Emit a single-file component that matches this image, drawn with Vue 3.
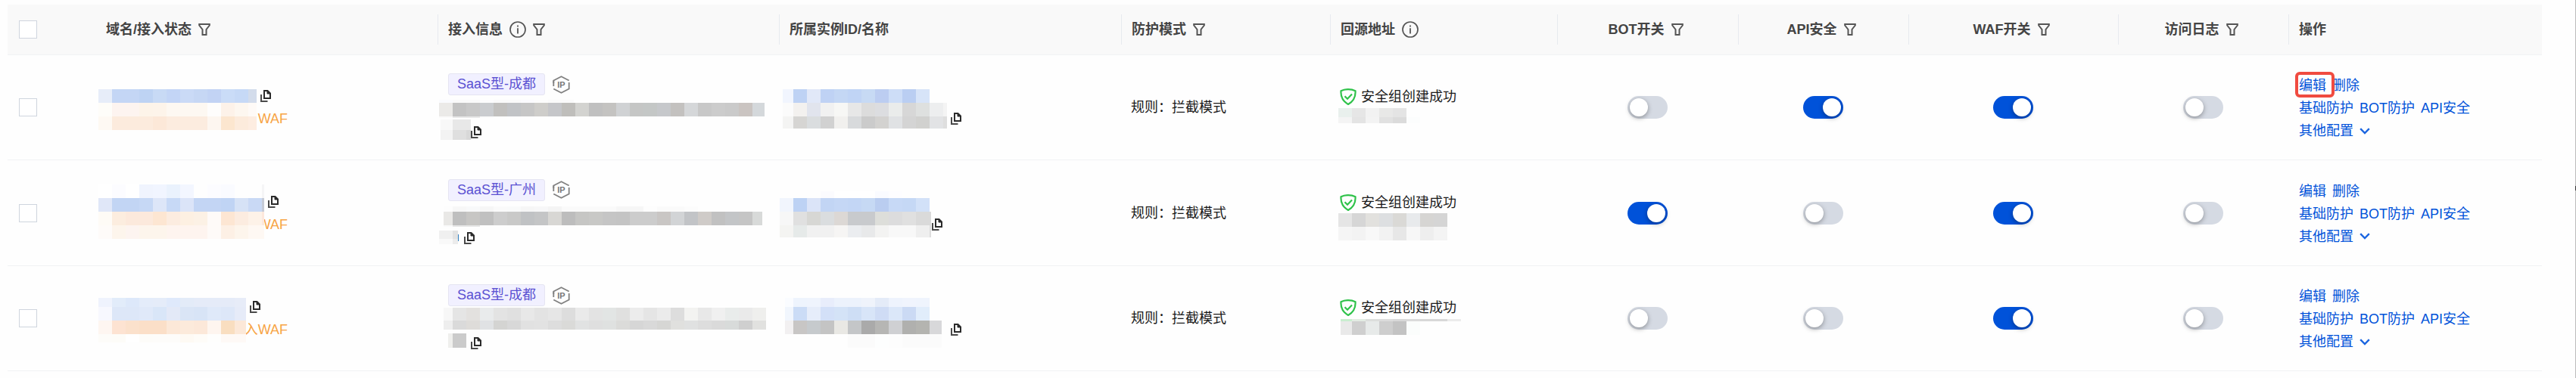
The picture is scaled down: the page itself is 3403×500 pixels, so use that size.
<script setup>
import { reactive, h } from 'vue'

const CELL = 18

/* Redacted text: each band is [x, y, height, first cell width, right end, colours]. */
const Mosaic = (props) =>
  h(
    'svg',
    {
      class: 'mosaic',
      width: props.width,
      height: props.height,
      viewBox: `0 ${props.top} ${props.width} ${props.height}`,
      overflow: 'visible',
      'shape-rendering': 'crispEdges',
      'aria-hidden': 'true',
    },
    props.bands.flatMap(([x, y, height, first, end, colours]) =>
      colours.split(' ').map((c, i) => {
        const left = i === 0 ? x : x + first + (i - 1) * CELL
        const width = Math.max(0, Math.min(i === 0 ? first : CELL, end - left))
        return h('rect', { x: left, y, width, height, fill: '#' + c })
      }),
    ),
  )
Mosaic.props = ['width', 'height', 'top', 'bands']

const columns = [
  { key: 'domain', label: '域名/接入状态', filter: true },
  { key: 'info', label: '接入信息', info: true, filter: true },
  { key: 'instance', label: '所属实例ID/名称' },
  { key: 'mode', label: '防护模式', filter: true },
  { key: 'source', label: '回源地址', info: true },
  { key: 'bot', label: 'BOT开关', filter: true, center: true },
  { key: 'api', label: 'API安全', filter: true, center: true },
  { key: 'waf', label: 'WAF开关', filter: true, center: true },
  { key: 'log', label: '访问日志', filter: true, center: true },
  { key: 'ops', label: '操作' },
]
const switches = columns.filter((c) => c.center)

const rows = reactive([
  {
    id: 1,
    region: 'SaaS型-成都',
    status: 'WAF',
    statusSize: 'short',
    marked: true,
    checked: false,
    on: { bot: false, api: true, waf: true, log: false },
    domain: {
      width: 213,
      bands: [
        [4, -24, 18, 18, 213, 'e7edf9 c4d6f5 c4d6f5 bed3f3 c8daf5 c3d5f6 cadaf6 c6d7f4 c2d3f4 cadcf7 c6d9f6 d3dceb'],
        [4, -6, 18, 18, 213, 'fefdf9 fdf4f0 fdf4f0 fdf4e9 fdf4ea fdf8f2 fdf8f2 fdf8f2 fefdfc fdf2e9 fdf7f0 fefaf7'],
        [4, 12, 18, 18, 213, 'fef9f3 fcebdd fcebdd fcebdd fce8d8 fcecdf fcecdf fcecdf fdf6f0 fce6cf fcebdc fdede1'],
      ],
    },
    address: [
      [2, 6, 4, 18, 180, 'fafbfe fafafa fafafa fcfcfd fafafa fafafa fbfbfe fcfcfc fafafa fafafa'],
      [2, 10, 18, 18, 432, 'ebeae8 c3c3c3 c8c8c8 cacccf c1c0be c1c3c6 c6c6c6 cecdca c5c6c9 bfbebb d3d3d0 c0c0c0 c4c3c1 d0d2d4 c5c6c5 c4c7c6 c6c8cb c3c1bf d5d7d9 c8c8c8 cccccc cacaca cac4c1 d4d8db'],
      [2, 28, 2, 18, 74, 'fafafa e8e8e8 e8e8e8 fafafa'],
    ],
    addressEnd: {
      width: 44,
      bands: [
        [4, 1, 14, 16, 44, 'f8f8f8 e8e8e8 e8e8e8'],
        [4, 15, 13, 16, 44, 'f3f3f3 dfdfdf d8d8d8'],
      ],
    },
    instance: {
      width: 227,
      bands: [
        [5, -24, 18, 14, 199, 'f1f5fe bed2f4 e1e8f8 bfd2f4 c4d7f4 c0d4f5 c7daf4 bccdf1 cdddf7 bacef2 d7e4f8'],
        [5, -6, 18, 14, 222, 'fbfbfb f3f1ef e1e4ed f1f1f1 f7f7f5 e7e7e7 dcdcdc dcdde0 eaeceb d7d7d7 dee0df edeeef f4f4f4'],
        [5, 12, 16, 14, 222, 'f4f4f3 d6d5d3 dadddf d1d1d1 f1f0ee d8dadc cbcbcb d3d2d0 e0e2e4 d4d4d4 d1d1cf e2e3e5 dedede'],
      ],
    },
    source: [
      [11, 0, 12, 18, 101, 'e9f0ed e6e6e6 f2f2f2 e8e8e7 e4e4e4'],
      [11, 12, 8, 18, 119, 'f4f4f4 e4e4e4 f3f3f3 e1e1e1 dbdbdb fcfdfd'],
    ],
  },
  {
    id: 2,
    region: 'SaaS型-广州',
    status: 'WAF',
    statusSize: 'cut',
    marked: false,
    checked: false,
    on: { bot: true, api: false, waf: true, log: false },
    domain: {
      width: 223,
      bands: [
        [4, -38, 18, 18, 223, 'ffffff fcfcff ffffff f0f4fe f1f5ff eaf2fd f3f6ff fefefe fcfcff fafbff fefefe fefefe f5f5f6'],
        [4, -20, 18, 18, 223, 'e0e7f8 c2d5f4 c2d5f4 c6d8f5 dde6f8 c7d9f6 dbe4f8 c3d5f4 c3d5f4 c0d4f4 d6e2f6 c9d9f5 c6cbd6'],
        [4, -2, 18, 18, 223, 'fefbf6 fceddf fce9dc fce9dc fde6d2 fcece0 fdf0e2 fcf1e5 fefaf8 fde6d3 fcece0 fdf2e8 fde8dc'],
        [4, 16, 18, 18, 223, 'fefbf9 fdf5ec fdf4f0 fdf5ec fdf5ec fef4ef fef4ef fef4ef fefaf8 fdf0e5 fdf5ec fef8f3 fef8f3'],
      ],
    },
    address: [
      [8, 7, 7, 12, 344, 'fdfdfd f7f7f7 f8f9fa f6f6f6 fafafa f9fafa f6f6f6 f7f7f8 f4f4f4 fafafa fafafa fafafa fafafa f6f6f6 f6f6f6 fdfdfd fafafa fafafa fcfcfc'],
      [8, 14, 18, 12, 429, 'e9e8e6 bfbfbf c7c6c4 c0c0c0 cdcdcd c9c9c8 c0c2c4 c4c5c6 d8d7d4 bdbdbd c6c6c4 c8c8c6 c5c5c5 c4c4c4 cccccc cccccc c9c6c4 d2d4d6 c2c4c7 cfcbc8 c1c1c1 c3c5c7 c5c5c5 d8dad9'],
      [8, 32, 2, 12, 56, 'fafafa e6e6e6 e6e6e6'],
    ],
    addressEnd: {
      width: 35,
      bands: [
        [2, 8, 11, 18, 27, 'f0f0f0 e2e2e2'],
        [2, 19, 7, 18, 27, 'f9f9f9 ececec'],
        [27, 13, 9, 1, 28, '2f7fc0'],
      ],
    },
    instance: {
      width: 202,
      bands: [
        [55, -29, 9, 18, 163, 'fbfbfe ffffff ffffff ffffff fafbff fdfdff'],
        [1, -20, 18, 18, 199, 'f1f5fd bdd2f4 dbe4f8 c2d5f4 c5d7f5 c3d6f5 c6d9f4 bacdf0 c7d9f6 c5d8f5 d2e1f8'],
        [1, -2, 18, 18, 201, 'f7f7f7 e0e0e0 d7d7d4 dadddf dcd8d5 c8cacd c8cacd dddeda dcdcdd e0e0e0 dadada dadada'],
        [1, 16, 16, 18, 201, 'f4f4f2 e6eae9 f1f1f1 f1f1f1 f6f5f4 ebedf0 e8e9ea f3f3f2 f8f8f8 f8f8f8 efefef dddddd'],
      ],
    },
    source: [
      [11, -1, 18, 18, 155, 'e5e5e5 d6d6d6 e2e1de dddfe1 dad9d6 e8eaec d6d5d3 d5d5d5'],
      [11, 17, 18, 18, 155, 'f5f5f5 f3f3f3 f8f8f8 f2f2f2 e7e7e7 f7f7f7 eeeeee f4f4f4'],
    ],
  },
  {
    id: 3,
    region: 'SaaS型-成都',
    status: '入WAF',
    statusSize: 'full',
    marked: false,
    checked: false,
    on: { bot: false, api: false, waf: true, log: false },
    domain: {
      width: 199,
      bands: [
        [4, -27, 12, 18, 199, 'eff3fd e2ecfa dde8fa e4ecfa e5ecf9 dfe9fb e3ebf8 e5ebf8 e5ebf8 e5ebf8 e7ecf8'],
        [4, -15, 18, 18, 199, 'f7f8fe dde7f8 dde7f8 e0e9f9 d9e6f8 e3e9f7 dae5f6 d8e4f6 dfe9f9 dde7f8 e6ebf8'],
        [4, 3, 18, 18, 199, 'fef6f1 fde3d2 fbe1cc fbdfc8 fbdfc8 fce8d8 fceadb fce8d9 fef5ef f9dec0 fce8d8'],
        [4, 21, 11, 18, 199, 'fdfcf9 fdfcf8 ffffff fdfcf9 fdfcfa fdfcfa fefaf4 fefcf8 fefefd fef9f6 fef9f6'],
      ],
    },
    address: [
      [8, 2, 17, 12, 434, 'f7f7f7 e5e5e5 e3e1df e9ebec e3e3e3 e0e0e0 e8e8e8 e3e3e3 e6e6e6 dddddd eaeaea e3e3e3 e2e5e4 e0e0df ececec e5e5e5 ebebeb dddddd f3f3f1 e8e8e8 f0f0f0 e9eceb eaeaea efefed'],
      [8, 19, 12, 12, 434, 'eeeeee dadada dedcd9 e0e2e4 d4d4d2 d8d8d8 e1e1e1 e2e2e2 dddddd dadad8 e1e2e2 dfdfdf dfe1e0 dbdbd9 d6d6d6 d9d9d9 d6d6d4 e0e0de e0e1e1 dddddd dadada d8dbda cfcfcf e1e1df'],
    ],
    addressEnd: {
      width: 44,
      bands: [[14, 5, 19, 6, 38, 'efefed cbcbcb']],
    },
    instance: {
      width: 227,
      bands: [
        [8, -27, 12, 11, 199, 'fafcff eef4fd eff4fd e8edfb ecf2fc ecf2fc eff3fb e4ebf8 eef3fd f0f4fd eff4fd'],
        [8, -15, 18, 11, 199, 'f1f6fd cbdcf6 e6edfa d3e0f8 d4e3f7 cedef5 d8e5f8 cfdcf5 dbe7f9 cbdaf4 e1edfb'],
        [8, 3, 18, 11, 215, 'f2f0f1 c8c6c5 c6cacd c4c4c4 e9e8e4 c4c6c8 aaaaaa b6b6b4 cfd0d3 b0b0ae b4b4b0 d8d8da'],
        [91, 21, 18, 18, 215, 'fbfbfb fbfbfb fdfefe fdfdfd fbfbfb fbfbfb fbfbfb'],
      ],
    },
    source: [
      [14, 0, 3, 15, 173, 'c9eed0 e3ece3 dcdedc dcdcdc d8d8d8 dbdbdb d8d8d8 d8d8d8 ececec'],
      [14, 3, 18, 15, 119, 'e9e9e9 cfcfcf e7eae9 cecece c3c3c3 fbfdfc'],
    ],
  },
])

const CopyButton = () =>
  h('button', { class: 'copy', type: 'button', 'aria-label': '复制' }, [
    h('svg', { width: 14, height: 16, viewBox: '0 0 14 16', fill: 'none', stroke: '#2b2b2b' }, [
      h('path', { d: 'M5 1h4.500l3.500 3.500V11H5z', 'stroke-width': 2 }),
      h('path', { d: 'M9 1v4h4z', fill: '#2b2b2b', 'stroke-width': 1 }),
      h('path', { d: 'M1 6v9h8.500', 'stroke-width': 2, stroke: '#4a4a4a' }),
    ]),
  ])

function toggleAll(event) {
  rows.forEach((row) => (row.checked = event.target.checked))
}
</script>

<template>
  <main class="page">
    <table class="grid">
      <colgroup>
        <col class="c-check" />
        <col v-for="c in columns" :key="c.key" :class="'c-' + c.key" />
      </colgroup>
      <thead>
        <tr>
          <th class="pick"><input type="checkbox" class="box" aria-label="全选" @change="toggleAll" /></th>
          <th v-for="c in columns" :key="c.key" scope="col">
            <div class="head" :class="{ center: c.center, first: c.key === 'domain' }">
              <span>{{ c.label }}</span>
              <svg v-if="c.info" class="info" width="22" height="22" viewBox="0 0 22 22" fill="none" stroke="#555">
                <circle cx="11" cy="11" r="10" stroke-width="1.7" />
                <path d="M11 9.200v7.300M11 5.500v2" stroke-width="1.800" />
              </svg>
              <button v-if="c.filter" class="filter" type="button" :aria-label="'筛选' + c.label">
                <svg width="16" height="16" viewBox="0 0 16 16" fill="none" stroke="#555" stroke-width="2">
                  <path d="M1.200 1h13.600v1.500L10.500 8v7h-5V8L1.200 2.500z" />
                </svg>
              </button>
            </div>
          </th>
        </tr>
      </thead>
      <tbody>
        <tr v-for="row in rows" :key="row.id">
          <td class="pick"><input v-model="row.checked" type="checkbox" class="box" :aria-label="'选择第' + row.id + '行'" /></td>
          <td>
            <div class="line">
              <Mosaic :width="row.domain.width" :height="90" :top="-45" :bands="row.domain.bands" />
              <div class="side">
                <div class="slot"><CopyButton /></div>
                <div class="status" :class="row.statusSize"><span>{{ row.status }}</span></div>
              </div>
            </div>
          </td>
          <td>
            <div class="tagline">
              <span class="tag">{{ row.region }}</span>
              <svg width="23" height="24" viewBox="0 0 23 24" fill="none" stroke="#808080" stroke-width="1.800">
                <path d="M1.300 10V6.500L11.500 1.200 21.700 6.500" />
                <path d="M21.700 9v8.500L11.500 22.800 1.300 17.500" />
                <path d="M1.300 6.500V14" />
                <text x="11.500" y="16" class="ip">IP</text>
              </svg>
            </div>
            <Mosaic :width="436" :height="31" :top="0" :bands="row.address" />
            <div class="line low">
              <Mosaic :width="row.addressEnd.width" :height="30" :top="0" :bands="row.addressEnd.bands" />
              <CopyButton />
            </div>
          </td>
          <td>
            <div class="line inst">
              <Mosaic :width="row.instance.width" :height="90" :top="-45" :bands="row.instance.bands" />
              <CopyButton />
            </div>
          </td>
          <td class="text">规则：拦截模式</td>
          <td class="stack">
            <div class="safe">
              <svg width="22" height="22" viewBox="0 0 22 22" fill="none" stroke="#2fc24a">
                <path d="M11 1.200C14.500 1.200 18 2 20.500 3.300 21 10.500 18 17 11 21 4 17 1 10.500 1.500 3.300 4 2 7.500 1.200 11 1.200z" stroke-width="2.200" />
                <path d="M6.500 10.200l3.500 3.500 6-6.200" stroke-width="2.200" />
              </svg>
              <span>安全组创建成功</span>
            </div>
            <Mosaic :width="176" :height="30" :top="0" :bands="row.source" />
          </td>
          <td v-for="s in switches" :key="s.key" class="toggle">
            <input v-model="row.on[s.key]" type="checkbox" role="switch" class="switch" :aria-label="s.label" />
          </td>
          <td class="ops stack">
            <div class="links">
              <a href="#" :class="{ marked: row.marked }">编辑</a>
              <a href="#">删除</a>
            </div>
            <div class="links">
              <a href="#">基础防护</a>
              <a href="#">BOT防护</a>
              <a href="#">API安全</a>
            </div>
            <div class="links">
              <button type="button" class="more">
                其他配置
                <svg width="14" height="9" viewBox="0 0 14 9" fill="none" stroke="#1c66e0" stroke-width="2.400">
                  <path d="M1.200 1.200L7 7l5.800-5.800" />
                </svg>
              </button>
            </div>
          </td>
        </tr>
      </tbody>
    </table>
    <i class="handle"></i>
  </main>
</template>

<style>
body {
  background: #fff;
}
</style>

<style scoped>
.page {
  position: relative;
  box-sizing: border-box;
  min-height: 100vh;
  padding: 6px 44px 0 10px;
  border-right: 1px solid #bbb;
  background: #fefefe;
  color: #1a1a1a;
  font: 18px/30px 'Liberation Sans', 'Noto Sans CJK SC', sans-serif;
}
.handle {
  position: absolute;
  top: 246px;
  right: -1px;
  width: 1px;
  height: 6px;
  background: #333;
}
.grid {
  width: 100%;
  table-layout: fixed;
  border-collapse: separate;
  border-spacing: 0;
}
.c-check { width: 116px; }
.c-domain { width: 452px; }
.c-info { width: 451px; }
.c-instance { width: 452px; }
.c-mode { width: 276px; }
.c-source { width: 300px; }
.c-bot { width: 239px; }
.c-api { width: 225px; }
.c-waf { width: 277px; }
.c-log { width: 225px; }
.c-ops { width: 335px; }
th,
td {
  box-sizing: border-box;
  padding: 0;
  border-bottom: 1px solid #f1f2f4;
  text-align: left;
  vertical-align: middle;
  white-space: nowrap;
}
th {
  height: 67px;
  background: #f9f9f9;
  color: #444;
  font-weight: 700;
}
td {
  height: 139px;
}
tr:nth-child(even) td {
  height: 140px;
}
.head {
  display: flex;
  align-items: center;
  gap: 9px;
  height: 40px;
  padding-left: 13px;
  border-left: 1px solid #e7eaef;
}
.head.first {
  border-left-color: transparent;
}
.head.center {
  justify-content: center;
  padding-right: 6px;
  padding-left: 0;
}
button {
  display: block;
  padding: 0;
  border: 0;
  background: none;
  color: inherit;
  font: inherit;
  cursor: pointer;
}
.copy {
  display: flex;
}
svg {
  display: block;
  flex: none;
}
.mosaic {
  position: relative;
  z-index: 1;
}
.pick {
  padding-left: 15px;
}
.box {
  display: block;
  appearance: none;
  box-sizing: border-box;
  width: 24px;
  height: 24px;
  margin: 0;
  border: 1px solid #cfd5de;
  background: #fff;
}
.box:checked {
  background: #0052d9;
}
.line {
  display: flex;
}
.side {
  display: flex;
  flex-direction: column;
  justify-content: center;
}
.slot {
  display: flex;
  align-items: center;
  height: 30px;
  padding-left: 5px;
}
.status {
  display: flex;
  justify-content: flex-end;
  height: 30px;
  color: #f7a445;
}
.status.short { width: 41px; }
.status.cut { width: 31px; }
.status.full { width: 55px; }
.tagline {
  display: flex;
  align-items: center;
  gap: 10px;
  height: 29px;
  padding-left: 14px;
}
.tag {
  box-sizing: border-box;
  height: 29px;
  padding: 0 11px;
  border: 1px solid #e5e5f2;
  border-radius: 3px;
  background: #f1f0ff;
  color: #5a50d2;
  line-height: 27px;
}
.ip {
  fill: #777;
  stroke: none;
  font: 700 11px/1 'Liberation Sans', sans-serif;
  text-anchor: middle;
}
.low {
  align-items: center;
}
.low .copy {
  margin-top: 6px;
}
.inst {
  align-items: center;
}
.inst .copy {
  margin-top: 30px;
}
.text {
  padding-left: 13px;
}
.stack {
  padding-top: 2px;
}
.safe {
  display: flex;
  align-items: center;
  gap: 6px;
  height: 30px;
  padding-left: 13px;
}
.switch {
  display: block;
  appearance: none;
  box-sizing: border-box;
  width: 53px;
  height: 30px;
  margin: 0 auto;
  padding: 3px;
  border-radius: 15px;
  background: #d5dae3;
  cursor: pointer;
}
.switch::before {
  display: block;
  width: 24px;
  height: 24px;
  border-radius: 50%;
  background: #fff;
  box-shadow: 0 2px 6px rgb(0 0 0 / 35%);
  content: '';
}
.switch:checked {
  background: #0052d9;
}
.switch:checked::before {
  margin-left: auto;
}
.ops {
  padding-left: 14px;
}
.links {
  display: flex;
  gap: 8px;
  color: #0052d9;
}
.links a {
  position: relative;
  color: inherit;
  text-decoration: none;
}
.marked::after {
  position: absolute;
  z-index: 1;
  top: -3px;
  left: -5px;
  box-sizing: border-box;
  width: 52px;
  height: 34px;
  border: 4px solid #f04b40;
  border-radius: 6px;
  content: '';
}
.more {
  display: flex;
  align-items: center;
  gap: 8px;
}
</style>
